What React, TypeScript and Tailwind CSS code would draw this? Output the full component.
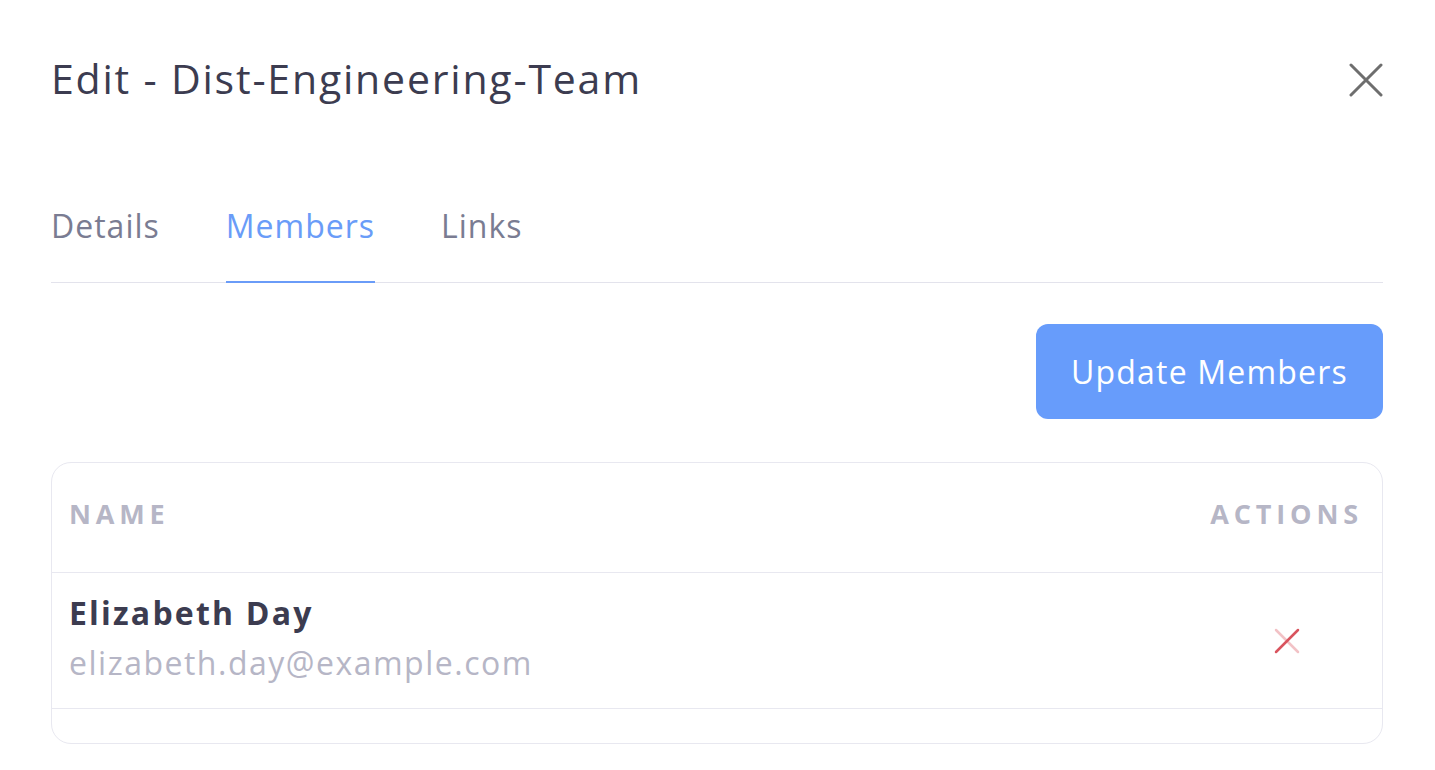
import React from 'react';

const font = { fontFamily: '"Open Sans", "Noto Sans", sans-serif' };

const members = [{ name: 'Elizabeth Day', email: 'elizabeth.day@example.com' }];

const App: React.FC = () => {
  const tabs = ['Details', 'Members', 'Links'];
  const active = 'Members';

  return (
    <div className="min-h-screen w-full bg-white pl-[51px] pr-[52px]" style={font}>
      {/* header */}
      <div className="flex items-center justify-between pt-[50px]">
        <h1 className="text-[41px] leading-[56px] tracking-[1.8px] text-[#3c3c50]">Edit - Dist-Engineering-Team</h1>
        <button className="mt-[4px] text-[#6e6e6e]">
          <svg width="34" height="34" viewBox="0 0 34 34" fill="none" stroke="currentColor" strokeWidth="3" strokeLinecap="round">
            <path d="M2 2L32 32M32 2L2 32" />
          </svg>
        </button>
      </div>

      {/* tabs */}
      <div className="mt-[100px] flex gap-[66px] border-b border-[#e3e3ec]">
        {tabs.map((tab) => (
          <div
            key={tab}
            className={
              tab === active
                ? '-mb-px border-b-2 border-[#6a9cf8] pb-[35px] text-[32px] leading-[40px] tracking-[1px] text-[#6a9cf8]'
                : 'pb-[35px] text-[32px] leading-[40px] tracking-[1px] text-[#7a7c92]'
            }
          >
            {tab}
          </div>
        ))}
      </div>

      {/* actions */}
      <div className="mt-[41px] flex justify-end">
        <button className="h-[95px] rounded-[12px] bg-[#679cfb] px-[35px] text-[32px] tracking-[1.2px] text-white">
          Update Members
        </button>
      </div>

      {/* table */}
      <div className="mt-[43px] overflow-hidden rounded-[20px] border border-[#e8e8f0]">
        <div className="flex h-[110px] items-center justify-between border-b border-[#e8e8f0] pb-[7px] pl-[17px] pr-[19px]">
          <span className="text-[27px] font-bold tracking-[0.18em] text-[#b6b6c6]">NAME</span>
          <span className="text-[27px] font-bold tracking-[0.18em] text-[#b6b6c6]">ACTIONS</span>
        </div>
        {members.map((m) => (
          <div key={m.email} className="flex h-[136px] items-center justify-between border-b border-[#e8e8f0] pl-[17px] pr-[19px]">
            <div className="-mt-[5px] flex flex-col">
              <span className="text-[32px] font-bold leading-[50px] tracking-[2.2px] text-[#3c3c50]">{m.name}</span>
              <span className="text-[32px] leading-[50px] tracking-[1.5px] text-[#b6b6c6]">{m.email}</span>
            </div>
            <div className="flex w-[153px] justify-center">
              <svg width="26" height="26" viewBox="0 0 26 26" fill="none" strokeWidth="2.5" strokeLinecap="round">
                <path d="M2 2L24 24" stroke="#f2c2c6" />
                <path d="M24 2L2 24" stroke="#d9545e" />
              </svg>
            </div>
          </div>
        ))}
        <div className="h-[34px]" />
      </div>
    </div>
  );
};

export default App;
